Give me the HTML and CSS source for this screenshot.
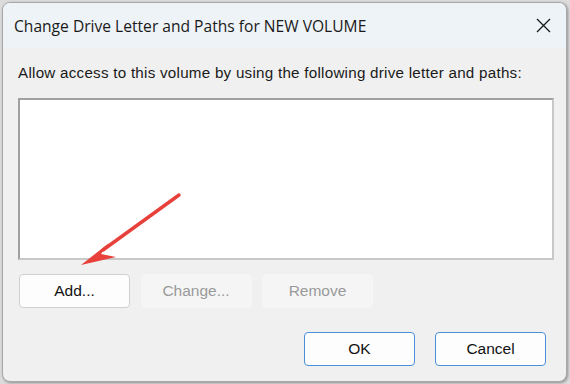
FILE: index.html
```html
<!doctype html>
<html>
<head>
    <meta charset="utf-8">
    <title>Change Drive Letter and Paths</title>
    <link rel="stylesheet" href="styles.css">
</head>
<body>
    <div class="window">
        <div class="titlebar">
            <span class="title">Change Drive Letter and Paths for NEW VOLUME</span>
            <svg class="close" width="15" height="15" viewBox="0 0 15 15">
                <path d="M1 1 L14 14 M14 1 L1 14" stroke="#1a1a1a" stroke-width="1.3" fill="none"/>
            </svg>
        </div>
        <div class="content">
            <p class="label">Allow access to this volume by using the following drive letter and paths:</p>
            <div class="listbox"></div>
            <div class="row">
                <button class="btn">Add...</button>
                <button class="btn disabled">Change...</button>
                <button class="btn disabled">Remove</button>
            </div>
            <div class="row footer">
                <button class="btn primary">OK</button>
                <button class="btn primary">Cancel</button>
            </div>
        </div>
        <svg class="arrow" width="120" height="90" viewBox="0 0 120 90">
            <path d="M100 4 L24 59" stroke="#e8403a" stroke-width="3.4" stroke-linecap="round" fill="none"/>
            <path d="M2 74 L30 52 L22 63 L37 66 Z" fill="#e8403a"/>
        </svg>
    </div>
</body>
</html>
```

FILE: styles.css
```css
html {
    background: #dcdcdc;
}

body {
    margin: 0;
    height: 384px;
    overflow: hidden;
}

.window {
    position: relative;
    margin: 2px 3px 0 2px;
    height: 380px;
    border: 1px solid #a8a8a8;
    border-radius: 8px;
    background: #f0f0f0;
    overflow: hidden;
    box-sizing: border-box;
    box-shadow: 1px 1px 3px rgba(0, 0, 0, 0.35);
}

.titlebar {
    display: flex;
    align-items: center;
    justify-content: space-between;
    height: 45px;
    padding: 0 15px 0 11px;
    background: #edf3f7;
    font-family: "Open Sans", "Noto Sans", sans-serif;
    font-size: 15.6px;
    color: #1a1a1a;
}

.content {
    display: flex;
    flex-direction: column;
    padding: 0 12px 0 15px;
    font-family: "Liberation Sans", Arial, sans-serif;
    font-size: 15.2px;
    color: #1a1a1a;
}

.label {
    margin: 16px 0 0 0;
    line-height: 17px;
    letter-spacing: 0.25px;
}

.listbox {
    margin-top: 17px;
    height: 158px;
    background: #fff;
    border: 2px solid #a0a0a0;
    border-right-color: #c8c8c8;
    border-bottom-color: #c8c8c8;
}

.row {
    display: flex;
    gap: 10.5px;
    margin-top: 14px;
}

.btn {
    width: 111px;
    height: 34px;
    padding: 0;
    font-family: "Liberation Sans", Arial, sans-serif;
    font-size: 15.5px;
    color: #111;
    background: #fdfdfd;
    border: 1px solid #d0d0d0;
    border-radius: 4px;
}

.row .btn:first-child {
    margin-left: 1px;
}

.btn.disabled {
    color: #9a9a9a;
    background: #f5f5f5;
    border-color: #f5f5f5;
}

.footer {
    justify-content: flex-end;
    gap: 20px;
    margin-top: 24px;
    padding-right: 8px;
}

.btn.primary {
    border-color: #4a90d8;
}

.arrow {
    position: absolute;
    left: 76px;
    top: 188px;
}
```
